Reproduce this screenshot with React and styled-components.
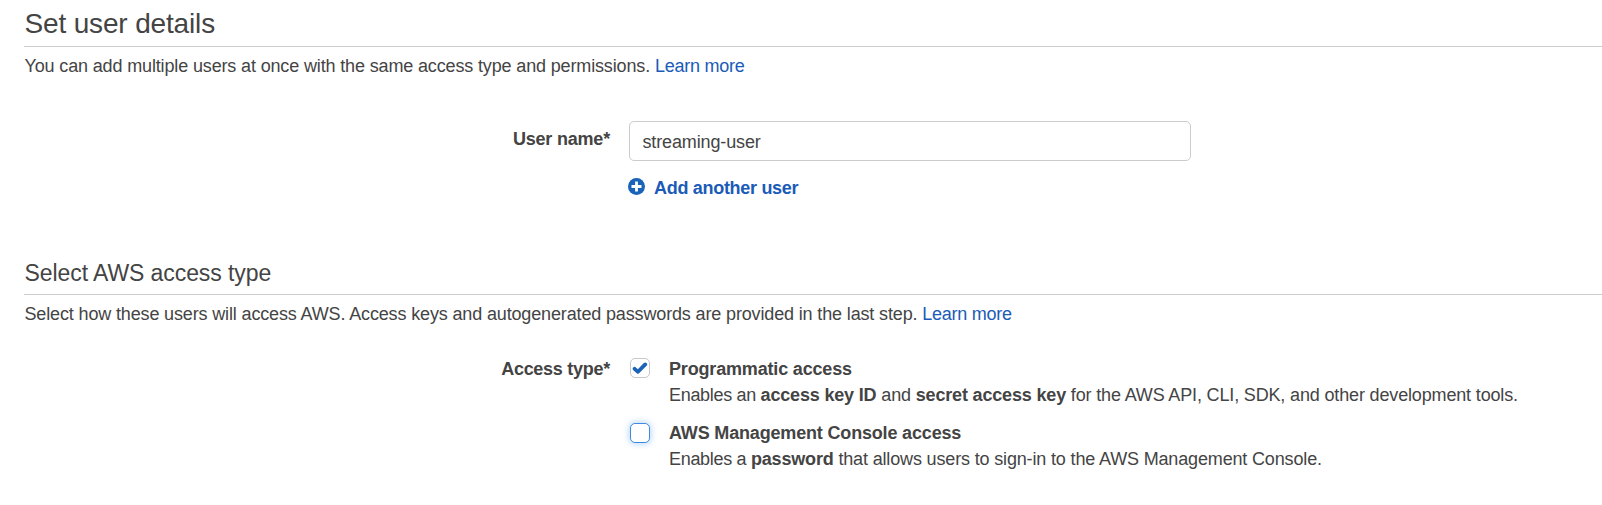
import React from "react";
import styled, { createGlobalStyle } from "styled-components";

const Global = createGlobalStyle`
  * { box-sizing: border-box; }
  body { margin: 0; background: #fff; color: #444; overflow: hidden;
    font: 18px/26px "Liberation Sans", Arial, sans-serif; letter-spacing: -0.155px; }
  h1, h2, p { margin: 0; font-weight: 400; white-space: nowrap; }
  b { letter-spacing: -0.17px; }
`;
const Page = styled.main`padding-left: 24px; height: 505px;`;
const Title = styled.h1`
  font-size: 28px; line-height: 48px; height: 47px; text-indent: 0.5px; border-bottom: 1px solid #ccc;
`;
const Subtitle = styled.h2`
  margin-top: 51px; font-size: 23px; line-height: 42px; height: 43px; text-indent: 0.5px;
  letter-spacing: -0.08px; border-bottom: 1px solid #ccc;
`;
const Intro = styled.p`padding: 6px 0 0 0.5px; letter-spacing: -0.145px;`;
const Link = styled.a`color: #1a5bb8; letter-spacing: -0.24px;`;
const Lead = styled.span`letter-spacing: -0.32px;`;
const Row = styled.div`
  display: grid; grid-template-columns: 587px 1fr; column-gap: 18px; margin-top: ${(p) => p.$top}px;
`;
const Label = styled.label`
  font-weight: 700; text-align: right; letter-spacing: ${(p) => p.$ls || -0.2}px;
  padding: ${(p) => p.$pad || 0}px 1px 0 0;
`;
const Input = styled.input`
  display: block; width: 562px; height: 40px; border: 1px solid #ccc; border-radius: 5px;
  padding: 2px 12px 0 12.5px; font: inherit; letter-spacing: -0.13px; color: #444; outline: 0;
`;
const Add = styled.button`
  display: flex; align-items: flex-start; gap: 9px; border: 0; background: none; padding: 0;
  margin: 14px 0 0 -1px; font: inherit; font-weight: 700; letter-spacing: -0.3px; color: #1a5bb8;
`;
const PlusIcon = styled.svg`display: block; margin-top: 3px;`;
const Options = styled.div`display: grid; row-gap: 12px;`;
const Option = styled.div`display: grid; grid-template-columns: 22px 1fr; column-gap: 18px;`;
const Box = styled.span`
  width: 20px; height: 20px; margin: ${(p) => (p.$focus ? 3 : 2)}px 0 0 1px;
  border-radius: 5px; background: #fff;
  border: 1px solid ${(p) => (p.$focus ? "#3f8ae0" : "#c8c8c8")};
  box-shadow: ${(p) => (p.$focus ? "0 0 6px 1px rgba(80, 155, 240, 0.4)" : "none")};
  display: flex; align-items: center; justify-content: center;
`;

export default function App() {
  return (
    <Page>
      <Global />
      <Title>Set user details</Title>
      <Intro>You can add multiple users at once with the same access type and permissions. <Link>Learn more</Link></Intro>
      <Row $top={42}>
        <Label $pad={5}>User name*</Label>
        <div>
          <Input defaultValue="streaming-user" spellCheck={false} />
          <Add>
            <PlusIcon width="17" height="17" viewBox="0 0 17 17">
              <circle cx="8.5" cy="8.5" r="8.5" fill="#1a63b8" />
              <path d="M8.5 3.5v10M3.5 8.5h10" stroke="#fff" strokeWidth="2.8" />
            </PlusIcon>
            Add another user
          </Add>
        </div>
      </Row>
      <Subtitle>Select AWS access type</Subtitle>
      <Intro>Select how these users will access AWS. Access keys and autogenerated passwords are provided in the last step. <Link>Learn more</Link></Intro>
      <Row $top={29}>
        <Label $ls={-0.27}>Access type*</Label>
        <Options>
          <Option>
            <Box>
              <svg width="16" height="14" viewBox="0 0 16 14">
                <path d="M2.6 7.8L6 10.8L13.2 3.4" fill="none" stroke="#1a63b8" strokeWidth="3.8" strokeLinecap="round" strokeLinejoin="round" />
              </svg>
            </Box>
            <div>
              <p><b>Programmatic access</b></p>
              <p><Lead>Enables an </Lead><b>access key ID</b> and <b>secret access key</b> for the AWS API, CLI, SDK, and other development tools.</p>
            </div>
          </Option>
          <Option>
            <Box $focus />
            <div>
              <p><b>AWS Management Console access</b></p>
              <p><Lead>Enables a </Lead><b>password</b> that allows users to sign-in to the AWS Management Console.</p>
            </div>
          </Option>
        </Options>
      </Row>
    </Page>
  );
}
